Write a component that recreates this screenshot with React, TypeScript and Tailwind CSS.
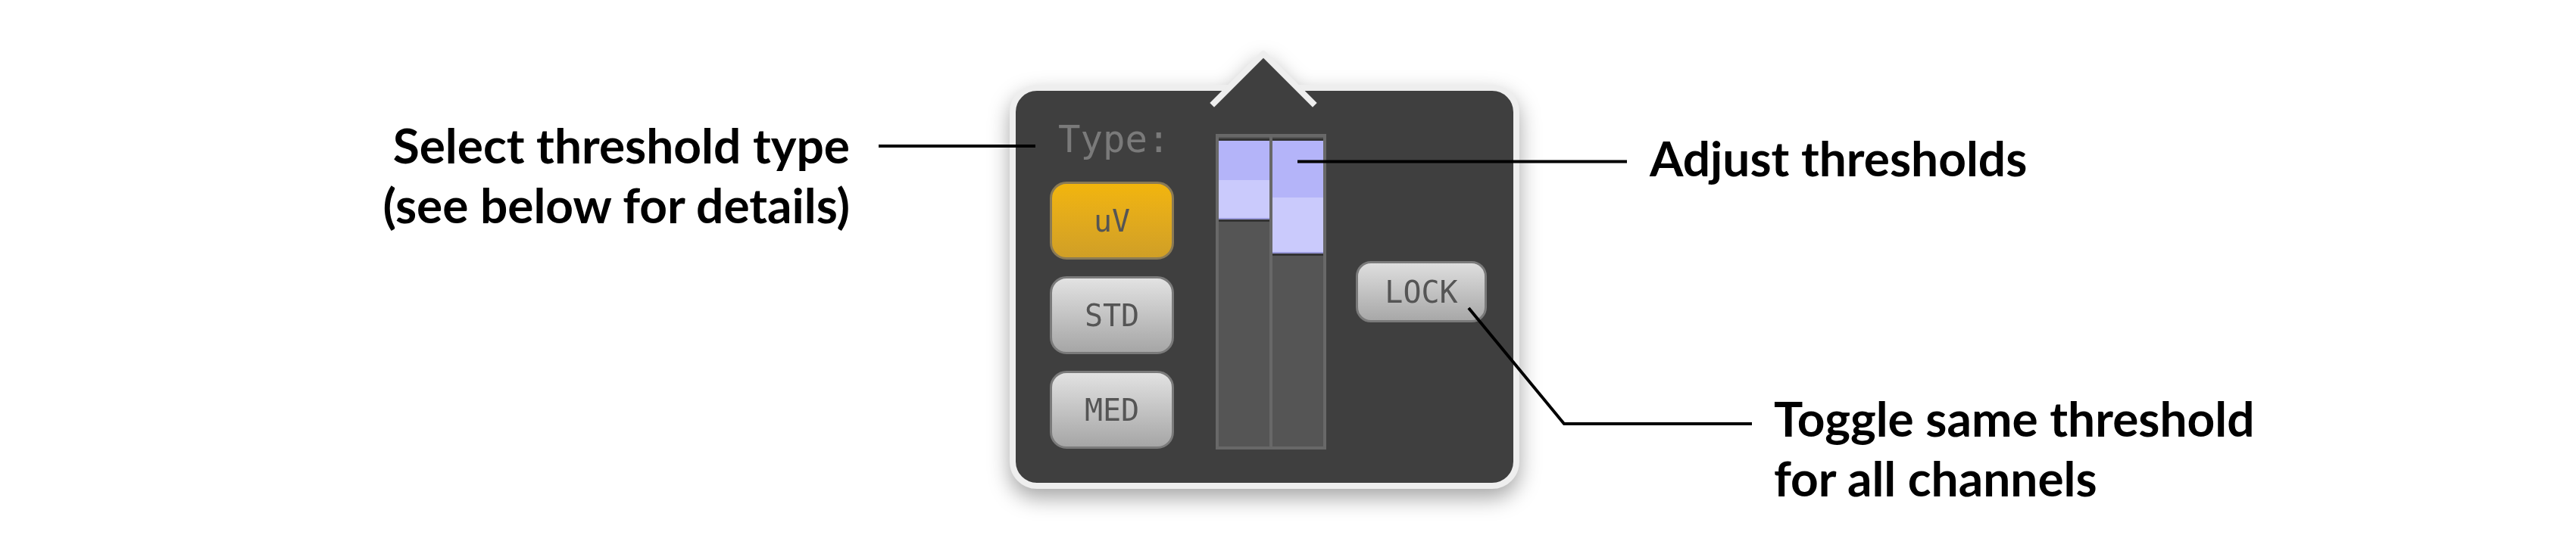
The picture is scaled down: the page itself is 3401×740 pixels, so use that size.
import React from "react";

const TypeButton = ({ label, active }: { label: string; active?: boolean }) => (
  <div
    className={
      active
        ? "h-[103px] rounded-[22px] border-[3px] border-[#8a7a55] bg-linear-to-b from-[#f2b50c] to-[#d09f26] flex items-center justify-center text-[40px] leading-none text-[#555555]"
        : "h-[103px] rounded-[22px] border-[3px] border-[#7a7a7a] bg-linear-to-b from-[#e2e2e2] to-[#a6a6a6] flex items-center justify-center text-[40px] leading-none text-[#555555]"
    }
  >
    {label}
  </div>
);

const Channel = ({ top, thumb }: { top: number; thumb: number }) => (
  <div className="flex-1 bg-[#555555] pt-[2px]">
    <div className="border-t-[3px] border-b-[3px] border-[#333333]">
      <div className="bg-[#b4b4f9]" style={{ height: top }} />
      <div className="bg-[#cacafc] border-b-[2px] border-[#9a9ada]" style={{ height: thumb }} />
    </div>
  </div>
);

export default function App() {
  return (
    <div className="relative w-[3401px] h-[740px] bg-white overflow-hidden flex items-start font-['Lato',sans-serif] text-black">
      {/* left callout */}
      <div className="w-[1122px] shrink-0 pt-[152px] text-right text-[64px] leading-[79px] font-bold whitespace-nowrap">
        Select threshold type
        <br />
        (see below for details)
      </div>

      {/* popover panel */}
      <div className="relative ml-[211px] mt-[112px] w-[673px] h-[534px] shrink-0 rounded-[36px] border-[8px] border-[#eeeeee] bg-[#3f3f3f] drop-shadow-[0_12px_14px_rgba(0,0,0,0.35)] font-['DejaVu_Sans_Mono',monospace]">
        <div className="absolute left-[277px] top-[-34px] w-[100px] h-[100px] rotate-45 rounded-tl-[4px] border-t-[8px] border-l-[8px] border-[#eeeeee] bg-[#3f3f3f]" />
        <div className="relative flex items-start pl-[45px]">
          <div className="flex flex-col w-[164px] pt-[41px]">
            <div className="pl-[11px] text-[49px] leading-[48px] text-[#7a7a7a]">Type:</div>
            <div className="mt-[31px] flex flex-col gap-[22px]">
              <TypeButton label="uV" active />
              <TypeButton label="STD" />
              <TypeButton label="MED" />
            </div>
          </div>

          <div className="ml-[55px] mt-[57px] w-[146px] h-[417px] border-[4px] border-[#686868] bg-[#686868] flex gap-[4px]">
            <Channel top={52} thumb={52} />
            <Channel top={75} thumb={74} />
          </div>

          <div className="ml-[39px] mt-[225px] w-[173px] h-[81px] rounded-[20px] border-[3px] border-[#7a7a7a] bg-linear-to-b from-[#dedede] to-[#a8a8a8] flex items-center justify-center text-[40px] leading-none text-[#555555]">
            LOCK
          </div>
        </div>
      </div>

      {/* right callouts */}
      <div className="flex flex-col shrink-0 pt-[169px] text-[64px] leading-[79px] font-bold whitespace-nowrap">
        <div className="ml-[172px]">Adjust thresholds</div>
        <div className="ml-[336px] mt-[265px]">
          Toggle same threshold
          <br />
          for all channels
        </div>
      </div>

      {/* leader lines */}
      <svg className="absolute inset-0 pointer-events-none" width="3401" height="740">
        <g stroke="#000" strokeWidth="4" fill="none">
          <line x1="1160" y1="193" x2="1367" y2="193" />
          <line x1="1713" y1="213.5" x2="2148" y2="213.5" />
          <polyline points="1939,407 2065,560 2313,560" />
        </g>
      </svg>
    </div>
  );
}
